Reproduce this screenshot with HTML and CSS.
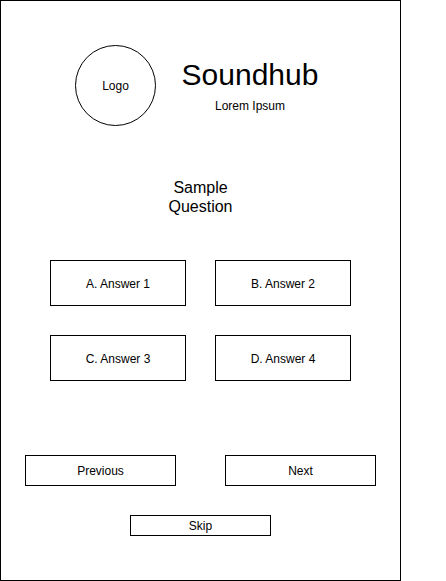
FILE: index.html
```html
<!DOCTYPE html>
<html lang="en">
<head>
<meta charset="utf-8">
<title>Soundhub</title>
<link rel="stylesheet" href="styles.css">
</head>
<body>
<div class="frame">
  <div class="header">
    <div class="logo">Logo</div>
    <div class="title">
      <div class="brand">Soundhub</div>
      <div class="tagline">Lorem Ipsum</div>
    </div>
  </div>
  <div class="question">Sample<br>Question</div>
  <div class="answers">
    <div class="box answer">A. Answer 1</div>
    <div class="box answer">B. Answer 2</div>
    <div class="box answer">C. Answer 3</div>
    <div class="box answer">D. Answer 4</div>
  </div>
  <div class="nav">
    <div class="box navbtn">Previous</div>
    <div class="box navbtn">Next</div>
  </div>
  <div class="box skip">Skip</div>
</div>
</body>
</html>
```
FILE: styles.css
```css
* { box-sizing: border-box; }
html, body { margin: 0; padding: 0; background: #fff; }
body {
  font-family: "Liberation Sans", Arial, Helvetica, sans-serif;
  color: #000;
  font-size: 12px;
}
.frame {
  width: 401px;
  height: 581px;
  border: 1px solid #000;
  display: flex;
  flex-direction: column;
}
.header {
  display: flex;
  margin-top: 44px;
  padding-left: 74px;
}
.logo {
  width: 81px;
  height: 81px;
  border: 1px solid #000;
  border-radius: 50%;
  display: flex;
  align-items: center;
  justify-content: center;
  font-size: 12px;
}
.title {
  width: 188px;
  display: flex;
  flex-direction: column;
  align-items: center;
  padding-top: 13px;
}
.brand {
  font-size: 30px;
  line-height: 34px;
}
.tagline {
  margin-top: 7px;
  font-size: 12px;
  line-height: 14px;
}
.question {
  margin-top: 52px;
  text-align: center;
  font-size: 16px;
  line-height: 19px;
}
.answers {
  margin-top: 44px;
  display: grid;
  grid-template-columns: 136px 136px;
  grid-auto-rows: 46px;
  gap: 29px;
  justify-content: center;
}
.box {
  border: 1px solid #000;
  display: flex;
  align-items: center;
  justify-content: center;
  font-size: 12px;
}
.answer {
  padding-top: 1px;
}
.nav {
  margin-top: 74px;
  display: flex;
  justify-content: center;
  gap: 49px;
}
.navbtn {
  width: 151px;
  height: 31px;
}
.skip {
  margin-top: 29px;
  align-self: center;
  width: 141px;
  height: 21px;
}
```
